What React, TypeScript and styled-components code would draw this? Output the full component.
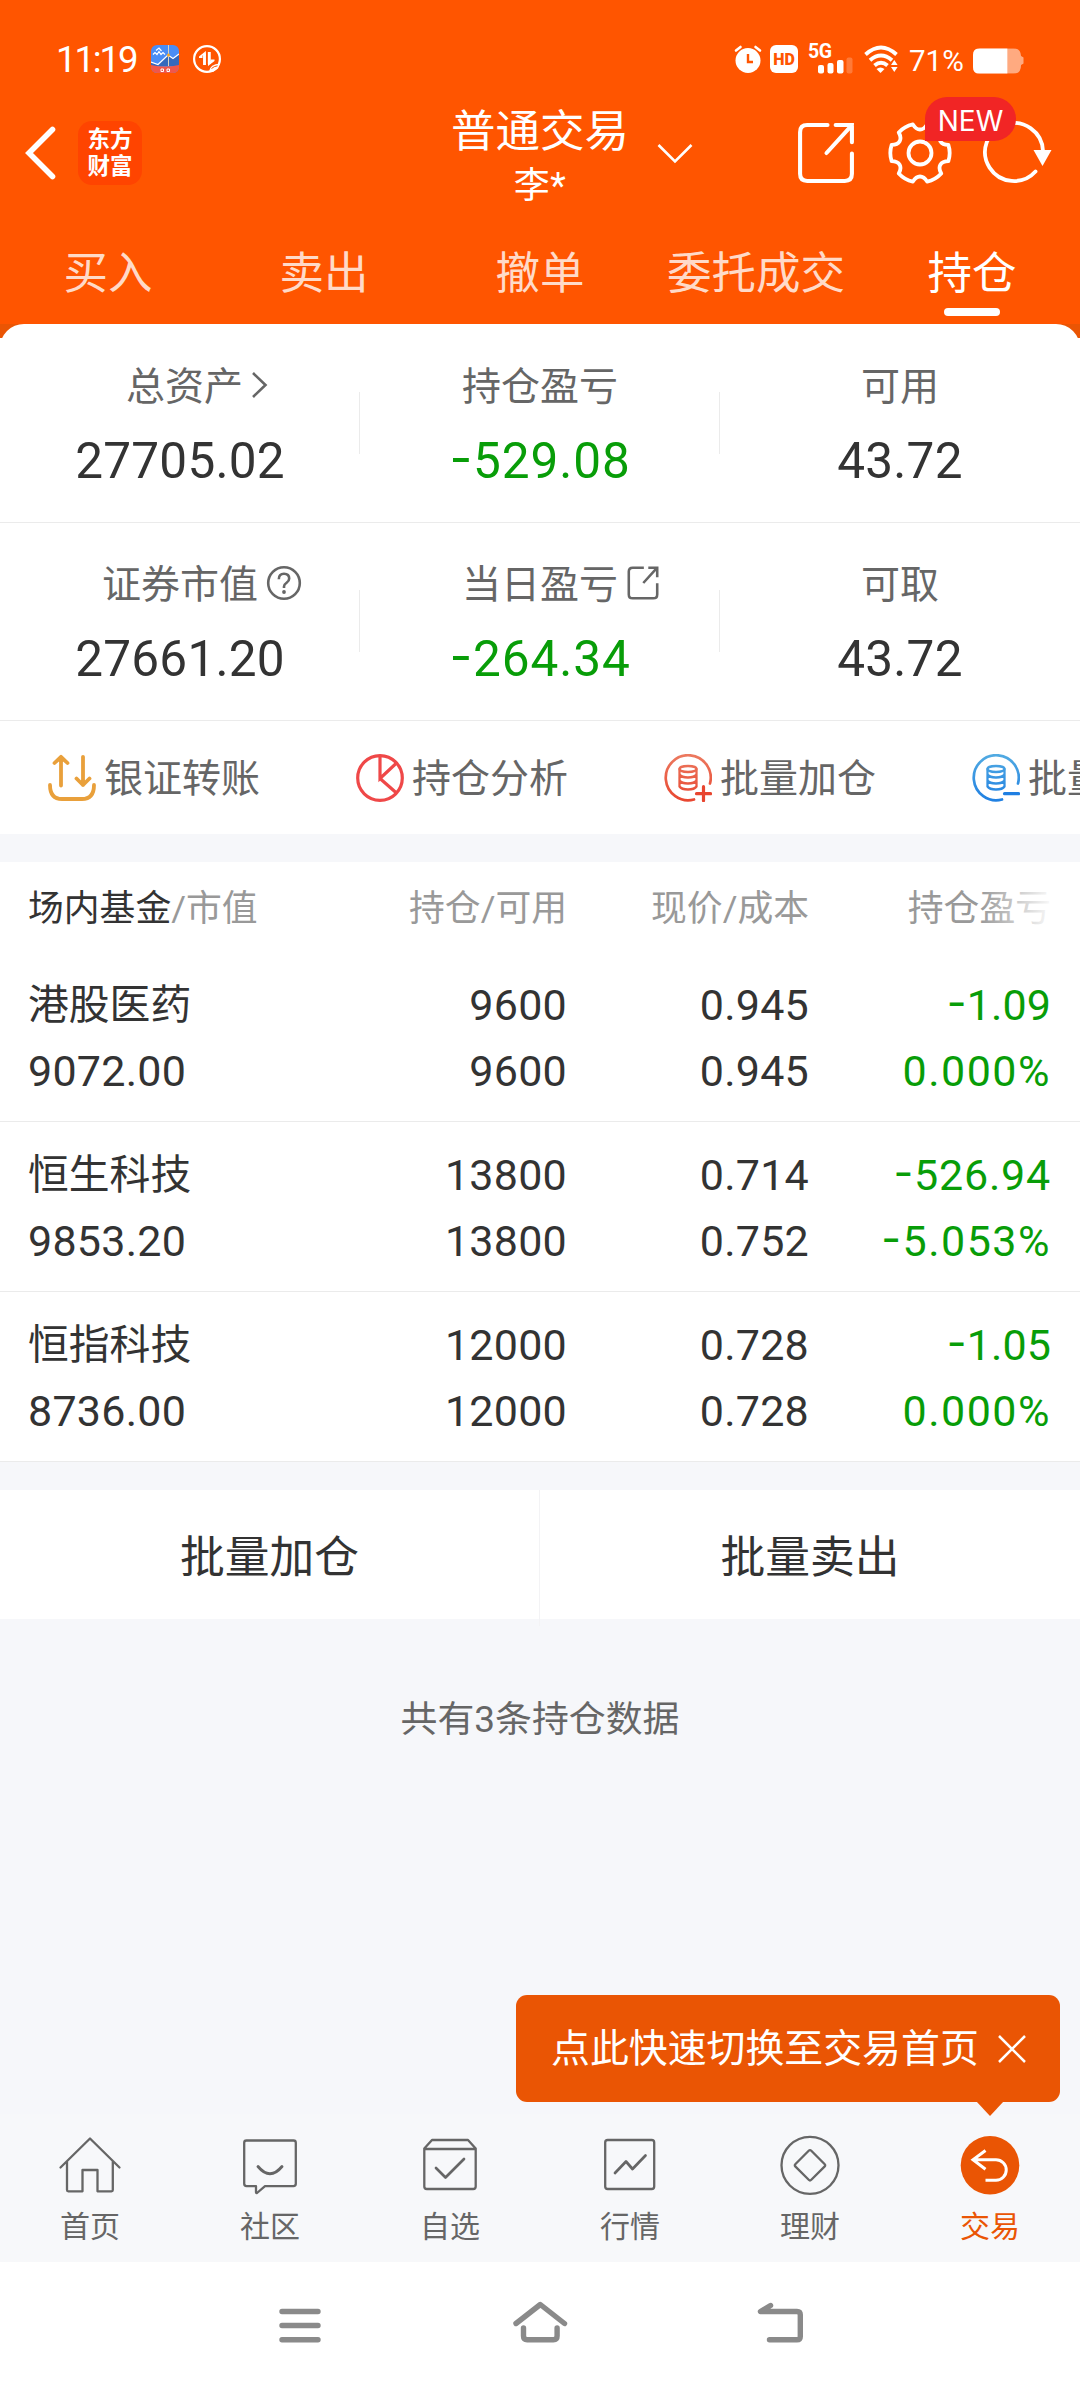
import React from 'react';
import styled, { createGlobalStyle } from 'styled-components';

const GlobalStyle = createGlobalStyle`
  *, *::before, *::after { box-sizing: border-box; }
  body {
    margin: 0;
    background: #f6f7fa;
    font-family: Roboto, "Noto Sans CJK SC", sans-serif;
    color: #333;
  }
  svg { display: block; flex: none; }
`;

const Screen = styled.div`
  width: 1080px;
  height: 2388px;
  display: flex;
  flex-direction: column;
  overflow: hidden;
  background: #f6f7fa;
`;

/* ---------- Header ---------- */

const Header = styled.header`
  height: 324px;
  flex: none;
  display: flex;
  flex-direction: column;
  background: #ff5500;
  color: #fff;
`;

const StatusBar = styled.div`
  height: 90px;
  padding: 28px 56px 0 56px;
  display: flex;
  justify-content: space-between;
`;

const StatusGroup = styled.div`
  height: 62px;
  display: flex;
  align-items: center;
`;

const Clock = styled.span`
  width: 95px;
  font-size: 36.5px;
  line-height: 62px;
  letter-spacing: -2.1px;
  padding-top: 1px;
`;

const HdBadge = styled.span`
  width: 28px;
  height: 28px;
  margin-left: 8px;
  border-radius: 6px;
  background: #fff;
  color: #ff5500;
  font: 900 16px/29px Roboto, sans-serif;
  text-align: center;
`;

const Signal = styled.svg`
  margin-left: 10px;
  overflow: visible;
`;

const Battery = styled.span`
  font-size: 29.5px;
  line-height: 62px;
  margin: 3px 8px 0 10px;
  width: 56px;
`;

const TitleBar = styled.div`
  height: 131px;
  display: grid;
  grid-template-columns: 360px 360px 360px;
`;

const BrandSide = styled.div`
  display: flex;
  align-items: center;
  padding: 0 0 5px 24px;
  gap: 20px;
`;

const BrandMark = styled.div`
  width: 64px;
  height: 64px;
  border-radius: 14px;
  background: #ff4400;
  display: flex;
  flex-direction: column;
  align-items: center;
  justify-content: center;
  font-size: 22.5px;
  font-weight: 700;
  line-height: 27px;
`;

const TitleSide = styled.div`
  display: flex;
  flex-direction: column;
  align-items: center;
  padding-top: 12px;
`;

const TitleLine = styled.div`
  font-size: 44.5px;
  line-height: 60px;
  white-space: nowrap;
`;

const AccountLine = styled.div`
  font-size: 36px;
  line-height: 48px;
  letter-spacing: 0.5px;
`;

const TitleWrap = styled.div`
  position: relative;
  display: flex;
  flex-direction: column;
  align-items: center;
`;

const Dropdown = styled.svg`
  position: absolute;
  left: 204px;
  top: 40px;
`;

const ActionSide = styled.div`
  position: relative;
  display: flex;
  align-items: center;
  padding: 0 0 5px 76px;
`;

const ActionIcon = styled.svg<{ $gap?: number }>`
  margin-left: ${(p) => p.$gap ?? 0}px;
`;

const NewBadge = styled.span`
  position: absolute;
  left: 205px;
  top: 7px;
  width: 91px;
  height: 44px;
  border-radius: 22px 22px 22px 0;
  background: #f12525;
  font: 400 28px/48px Inter, sans-serif;
  text-align: center;
`;

const Tabs = styled.nav`
  flex: 1;
  display: grid;
  grid-template-columns: repeat(5, 1fr);
`;

const Tab = styled.div<{ $active?: boolean }>`
  display: flex;
  flex-direction: column;
  align-items: center;
  padding-top: 23px;
  font-size: 44.5px;
  line-height: 60px;
  color: ${(p) => (p.$active ? '#fff' : '#ffdac8')};
  &::after {
    content: '';
    width: 56px;
    height: 8px;
    margin-top: 4px;
    border-radius: 4px;
    background: ${(p) => (p.$active ? '#fff' : 'transparent')};
  }
`;

/* ---------- Summary ---------- */

const SummaryBackdrop = styled.section`
  flex: none;
  background: linear-gradient(#ea5504 0 14px, #fff 14px);
`;

const SummaryCard = styled.div`
  border-radius: 24px 24px 0 0;
  background: #fff;
`;

const SummaryRow = styled.div<{ $height: number }>`
  height: ${(p) => p.$height}px;
  display: grid;
  grid-template-columns: repeat(3, 1fr);
  align-items: end;
  border-bottom: 1px solid #ebebeb;
`;

const SummaryCell = styled.div`
  height: 197px;
  padding-top: 36px;
  display: flex;
  flex-direction: column;
  align-items: center;
  background: linear-gradient(#ebebeb, #ebebeb) right 67px / 1px 62px no-repeat;
  &:last-child { background: none; }
`;

const SummaryLabel = styled.div`
  height: 52px;
  display: flex;
  align-items: center;
  font-size: 39px;
  line-height: 52px;
  color: #666;
`;

const LabelIcon = styled.svg<{ $pull: number }>`
  margin: 0 -${(p) => p.$pull}px 5px 8px;
`;

const SummaryValue = styled.div<{ $down?: boolean }>`
  margin-top: 18px;
  font-size: 49.5px;
  line-height: 60px;
  letter-spacing: ${(p) => (p.$down ? 0.9 : 0.2)}px;
  color: ${(p) => (p.$down ? '#089d08' : '#333')};
`;

const Sign = styled.span`
  font-family: Inter, sans-serif;
  font-feature-settings: 'case';
  line-height: 0;
`;

const Toolbar = styled.div`
  height: 113px;
  padding-left: 48px;
  display: flex;
  align-items: center;
  overflow: hidden;
  background: #fff;
`;

const Tool = styled.div`
  flex: none;
  width: 308px;
  display: flex;
  align-items: center;
  gap: 8px;
  font-size: 39px;
  line-height: 54px;
  color: #666;
`;

const ToolText = styled.span`
  padding-top: 2px;
`;

const Band = styled.div`
  flex: none;
  height: 28px;
`;

/* ---------- Holdings ---------- */

const Table = styled.section`
  flex: none;
  background: #fff;
`;

const TableHead = styled.div`
  position: relative;
  height: 90px;
  padding: 0 28px;
  display: grid;
  grid-template-columns: 539px 242px 242px;
  font-size: 35.8px;
  line-height: 94px;
  color: #999;
`;

const HeadFirst = styled.div`
  display: flex;
  justify-content: space-between;
`;

const HeadCell = styled.div`
  text-align: right;
  white-space: nowrap;
`;

const Strong = styled.span`
  color: #333;
`;

const HeadFade = styled.div`
  position: absolute;
  top: 0;
  right: 0;
  width: 100px;
  height: 90px;
  background: linear-gradient(90deg, rgba(255, 255, 255, 0), #fff 75%);
`;

const Row = styled.div`
  height: 170px;
  padding: 20px 28px 0;
  border-bottom: 1px solid #ebebeb;
`;

const RowLine = styled.div`
  display: grid;
  grid-template-columns: 296px 243px 242px 242px;
  font-size: 43px;
  line-height: 66px;
`;

const Name = styled.div`
  font-size: 40.8px;
`;

const Cell = styled.div<{ $left?: boolean; $down?: boolean; $tracking?: number }>`
  text-align: ${(p) => (p.$left ? 'left' : 'right')};
  letter-spacing: ${(p) => p.$tracking ?? 0.25}px;
  color: ${(p) => (p.$down ? '#089d08' : '#333')};
`;

const BatchBar = styled.div`
  flex: none;
  height: 129px;
  display: grid;
  grid-template-columns: 540px 540px;
  background: #fff;
`;

const BatchButton = styled.div`
  text-align: center;
  font-size: 44.8px;
  line-height: 136px;
  &:first-child { border-right: 1px solid #f3f3f5; }
`;

const Footnote = styled.div`
  flex: 1;
  padding-top: 75px;
  text-align: center;
  font-size: 36.9px;
  line-height: 52px;
  color: #666;
`;

/* ---------- Bottom ---------- */

const BottomTabs = styled.nav`
  position: relative;
  flex: none;
  height: 148px;
  display: grid;
  grid-template-columns: repeat(6, 1fr);
  background: #f7f8fa;
`;

const BottomTab = styled.div<{ $active?: boolean }>`
  display: flex;
  flex-direction: column;
  align-items: center;
  padding-top: 19px;
  font-size: 30px;
  line-height: 40px;
  color: ${(p) => (p.$active ? '#ea5504' : '#666')};
  & > svg { margin-bottom: 10px; }
`;

const Tip = styled.div`
  position: absolute;
  right: 20px;
  bottom: 160px;
  width: 544px;
  height: 107px;
  padding: 0 33px 0 35px;
  border-radius: 11px;
  background: #ea5504;
  color: #fff;
  display: flex;
  align-items: center;
  justify-content: space-between;
  font-size: 38.9px;
  line-height: 107px;
  white-space: nowrap;
  &::after {
    content: '';
    position: absolute;
    right: 56px;
    top: 106px;
    border: 14px solid transparent;
    border-top: 15px solid #ea5504;
    border-bottom: 0;
  }
`;

const SystemNav = styled.div`
  flex: none;
  height: 126px;
  padding: 0 270px;
  display: flex;
  justify-content: space-between;
  align-items: center;
  background: #fff;
`;

/* ---------- Icons ---------- */

const gearPath = (() => {
  const pt = (deg: number, r: number) => {
    const a = (deg * Math.PI) / 180;
    return `${(32 + r * Math.cos(a)).toFixed(2)} ${(32 + r * Math.sin(a)).toFixed(2)}`;
  };
  let d = '';
  for (let i = 0; i < 6; i++) {
    const t = i * 60;
    d += `${i === 0 ? 'M' : 'L'}${pt(t - 16, 29.5)}Q${pt(t, 31)} ${pt(t + 16, 29.5)}`;
    d += `C${pt(t + 22, 22)} ${pt(t + 38, 22)} ${pt(t + 44, 29.5)}`;
  }
  return d + 'Z';
})();

const BackIcon = () => (
  <svg width="34" height="60" viewBox="0 0 34 60" fill="none" stroke="#fff" strokeWidth="5.6" strokeLinecap="round">
    <path d="M28.500 6.500L5 30l23.500 23.500" />
  </svg>
);

const AppIcon = () => (
  <svg width="28" height="28" viewBox="0 0 28 28">
    <clipPath id="app"><rect width="28" height="28" rx="6" /></clipPath>
    <g clipPath="url(#app)">
      <rect width="28" height="28" fill="#4a8df5" />
      <path d="M0 17l7 2.500L17 10l5 3.500 6-4.500v12H0z" fill="#3569bd" />
      <path d="M0 20q14 3 28 0v8H0z" fill="#f0574a" />
      <path d="M0 17l7 2.500L17 10l5 3.500L28 9" fill="none" stroke="#fff" strokeWidth="1.200" />
      <path d="M17.500 0v21" stroke="#d9d3c0" strokeWidth="1" />
      <path d="M2 9.500l2-2 2 2 2-3 2 3 2-2 2 2M5 5.500L8 3l2.500 3" fill="none" stroke="#fff" strokeWidth="1.200" />
      <circle cx="17.500" cy="10" r="1.500" fill="#f5a623" />
      <path d="M10 24h2.500v2.500H10zM16 24h2.500v2.500H16z" fill="none" stroke="#fff" />
    </g>
  </svg>
);

const SyncIcon = styled.svg`
  margin-left: 14px;
`;

const SyncBadgeIcon = () => (
  <SyncIcon width="28" height="28" viewBox="0 0 28 28" fill="none" stroke="#fff">
    <circle cx="14" cy="14" r="12.900" strokeWidth="2.200" />
    <path d="M11.500 20V8.500M16.300 7v12" strokeWidth="2.900" />
    <path d="M12.900 6v4.500H9.500V13H6v-1.500zM15 21v-5h2.500v-1.500H21.500V16z" fill="#fff" stroke="none" />
    <path d="M16 26.500q1-7.500 11-8l-2 5-5 3.500z" fill="#fff" stroke="none" />
    <path d="M18.500 23.500q2.500-2.300 6-2.700" stroke="#ff5500" strokeWidth="1" />
  </SyncIcon>
);

const AlarmIcon = () => (
  <svg width="28" height="28" viewBox="0 0 28 28" fill="none">
    <circle cx="14" cy="15.500" r="12.500" fill="#fff" />
    <path d="M2 5.500L6.500 2M26 5.500L21.500 2" stroke="#fff" strokeWidth="2.600" strokeLinecap="round" />
    <path d="M14 9v8h5" stroke="#ff5500" strokeWidth="2.400" />
  </svg>
);

const SignalIcon = () => (
  <Signal width="46" height="32" viewBox="0 0 46 32" fill="#fff">
    <text x="0" y="15" fontFamily="Roboto, sans-serif" fontWeight="700" fontSize="19.500" textLength="24">5G</text>
    <rect x="10" y="22" width="6" height="8.500" rx="2" />
    <rect x="19.500" y="20" width="6" height="10.500" rx="2" />
    <rect x="29" y="17" width="6.500" height="13.500" rx="2" />
    <rect x="38.500" y="14.500" width="6" height="16" rx="2" opacity="0.220" />
  </Signal>
);

const Wifi = styled.svg`
  margin-left: 10px;
`;

const WifiIcon = () => (
  <Wifi width="35" height="28" viewBox="0 0 35 28" fill="none" stroke="#fff" strokeWidth="3.900">
    <path d="M1.500 9.500q15.500-14 31 0" />
    <path d="M6 15.200q11-9.500 22 0" />
    <path d="M10.500 20.500q6.500-5.500 13 0" />
    <path d="M12.500 24q4-3 8 0l-4 4z" fill="#fff" stroke="none" />
    <path d="M27 20l3.300-5 3.300 5zM27 22l3.300 5 3.300-5z" fill="#fff" stroke="none" />
  </Wifi>
);

const BatterySvg = styled.svg`
  margin-top: 3px;
`;

const BatteryIcon = () => (
  <BatterySvg width="51" height="26" viewBox="0 0 52 26">
    <clipPath id="bat"><path d="M7 0h34q7.500 0 8 8l2.500 1.500v6L49 17q0 9-8 9H7q-7 0-7-7V7q0-7 7-7z" /></clipPath>
    <g clipPath="url(#bat)">
      <rect width="52" height="26" fill="#ffaa80" />
      <rect width="35" height="26" fill="#fff" />
    </g>
  </BatterySvg>
);

const ShareStrokes = () => (
  <>
    <path d="M30 3H10Q3 3 3 10v41q0 7 7 7h37q7 0 7-7V31" />
    <path d="M38 3h16v17M54 3L29 30.500" />
  </>
);

const QuestionIcon = () => (
  <LabelIcon $pull={44} width="36" height="36" viewBox="0 0 36 36" fill="none" stroke="#666" strokeWidth="2.600">
    <circle cx="18" cy="18" r="15.800" />
    <path d="M12.800 14.200q0-5.400 5.200-5.400t5.200 4.800q0 2.400-2.600 4.200T18 21.500V23" />
    <circle cx="18" cy="27" r="1.900" fill="#666" stroke="none" />
  </LabelIcon>
);

const TransferIcon = () => (
  <svg width="48" height="48" viewBox="0 0 48 48" fill="none" stroke="#e9a03b" strokeWidth="3.800" strokeLinecap="round" strokeLinejoin="round">
    <path d="M13 31.500V2.800M6.500 9L13 2.800 19.500 9M35 2.800V31M28.500 24.500L35 31l6.500-6.500" />
    <path d="M2 31q0 14 12 14h20q12 0 12-14" />
  </svg>
);

const PieIcon = () => (
  <svg width="48" height="48" viewBox="0 0 48 48" fill="none" stroke="#ef4848" strokeWidth="3.200">
    <circle cx="24" cy="24" r="22.300" />
    <path d="M24 2v22.500L40.500 9M24 24.500L40.500 39" />
  </svg>
);

const StackIcon = ({ id, from, to, minus }: { id: string; from: string; to: string; minus?: boolean }) => (
  <svg width="48" height="48" viewBox="0 0 48 48" fill="none" stroke={`url(#${id})`} strokeWidth="2.700" strokeLinecap="round">
    <linearGradient id={id} gradientUnits="userSpaceOnUse" x1="0" y1="0" x2="0" y2="48">
      <stop stopColor={from} />
      <stop offset="1" stopColor={to} />
    </linearGradient>
    <path d="M30 45.500A22.500 22.500 0 1 1 46 29.500" />
    <ellipse cx="24" cy="15" rx="8.500" ry="3" strokeWidth="2.300" />
    <path d="M15.500 15v17.500q2 3 8.500 3t8.500-3V15M15.500 20.500q2 3 8.500 3t8.500-3M15.500 26.500q2 3 8.500 3t8.500-3" strokeWidth="2.300" />
    <path d={minus ? 'M32.500 39.700h14' : 'M32.500 39.700h14M39.500 32.700v14'} stroke={to} strokeWidth="3.200" />
  </svg>
);

const tabIconProps = {
  width: 64, height: 64, viewBox: '0 0 64 64', fill: 'none', stroke: '#666', strokeWidth: 2.3,
  strokeLinecap: 'round', strokeLinejoin: 'round',
} as const;

const bottomTabs: { label: string; icon: React.ReactNode; active?: boolean }[] = [
  {
    label: '首页',
    icon: (
      <svg {...tabIconProps}>
        <path d="M2.500 34.500L32 5.500l29.500 29M9 28.500V57q0 1.300 1.300 1.300h14.200V37h15v21.300h14q1.300 0 1.300-1.300V28.500" />
      </svg>
    ),
  },
  {
    label: '社区',
    icon: (
      <svg {...tabIconProps}>
        <path d="M8.500 7.500h47q2.300 0 2.300 2.300v41q0 2.300-2.300 2.300H27L19 60q-1 .5-1-1v-5.900H8.500q-2.300 0-2.300-2.300v-41q0-2.300 2.300-2.300z" />
        <path d="M20 33.500q12 14.500 24 0" strokeWidth="2.900" />
      </svg>
    ),
  },
  {
    label: '自选',
    icon: (
      <svg {...tabIconProps}>
        <path d="M6.300 15.500L14 7h36l7.700 8.500V53.500q0 2.500-2.500 2.500H8.800q-2.500 0-2.500-2.500zM6.300 16h51.400" />
        <path d="M18 35l9.500 9.500L46 26" strokeWidth="2.700" />
      </svg>
    ),
  },
  {
    label: '行情',
    icon: (
      <svg {...tabIconProps}>
        <rect x="7.200" y="7" width="49" height="49" rx="2.500" />
        <path d="M17 40l11-11.500 6.500 7.500L47.500 22.500" strokeWidth="2.700" />
      </svg>
    ),
  },
  {
    label: '理财',
    icon: (
      <svg {...tabIconProps}>
        <circle cx="32" cy="32.300" r="28.500" />
        <path d="M30.700 17.800q1.300-1.300 2.600 0L46.500 31q1.300 1.300 0 2.600L33.300 46.800q-1.300 1.300-2.600 0L17.500 33.600q-1.300-1.300 0-2.600z" />
      </svg>
    ),
  },
  {
    label: '交易',
    active: true,
    icon: (
      <svg {...tabIconProps} stroke="#fff" strokeWidth={3} strokeLinecap="butt">
        <circle cx="32" cy="32.300" r="29.300" fill="#ea5504" stroke="none" />
        <path d="M27.500 17.500L15 26.800l12.500 9.500M15 26.800h23a10.200 10.200 0 0 1 0 20.500H27.500" strokeLinejoin="miter" />
      </svg>
    ),
  },
];

const holdings = [
  { name: '港股医药', value: '9072.00', held: '9600', free: '9600', price: '0.945', cost: '0.945', pnl: '-1.09', rate: '0.000%' },
  { name: '恒生科技', value: '9853.20', held: '13800', free: '13800', price: '0.714', cost: '0.752', pnl: '-526.94', rate: '-5.053%' },
  { name: '恒指科技', value: '8736.00', held: '12000', free: '12000', price: '0.728', cost: '0.728', pnl: '-1.05', rate: '0.000%' },
];

const Signed = ({ value }: { value: string }) =>
  value.startsWith('-') ? (<><Sign>-</Sign>{value.slice(1)}</>) : (<>{value}</>);

export default function App() {
  return (
    <>
      <GlobalStyle />
      <Screen>
        <Header>
          <StatusBar>
            <StatusGroup>
              <Clock>11:19</Clock>
              <AppIcon />
              <SyncBadgeIcon />
            </StatusGroup>
            <StatusGroup>
              <AlarmIcon />
              <HdBadge>HD</HdBadge>
              <SignalIcon />
              <WifiIcon />
              <Battery>71%</Battery>
              <BatteryIcon />
            </StatusGroup>
          </StatusBar>
          <TitleBar>
            <BrandSide>
              <BackIcon />
              <BrandMark>
                <span>东方</span>
                <span>财富</span>
              </BrandMark>
            </BrandSide>
            <TitleSide>
              <TitleWrap>
                <TitleLine>普通交易</TitleLine>
                <AccountLine>李*</AccountLine>
                <Dropdown width="40" height="24" viewBox="0 0 40 24" fill="none" stroke="#fff" strokeWidth="2.600">
                  <path d="M3.500 3L20 19.500 36.500 3" />
                </Dropdown>
              </TitleWrap>
            </TitleSide>
            <ActionSide>
              <ActionIcon width="60" height="62" viewBox="0 0 57 61" fill="none" stroke="#fff" strokeWidth="4" strokeLinecap="round">
                <ShareStrokes />
              </ActionIcon>
              <ActionIcon $gap={32} width="64" height="64" viewBox="0 0 64 64" fill="none" stroke="#fff" strokeWidth="3.800" strokeLinejoin="round">
                <path d={gearPath} />
                <circle cx="32" cy="32" r="11.500" />
              </ActionIcon>
              <ActionIcon $gap={30} width="70" height="64" viewBox="0 0 70 64" fill="none" stroke="#fff" strokeWidth="3.800" strokeLinecap="round">
                <path d="M53.500 50.500A29 29 0 1 1 61 30" />
                <path d="M51.500 29h18L60.500 45z" fill="#fff" stroke="none" />
              </ActionIcon>
              <NewBadge>NEW</NewBadge>
            </ActionSide>
          </TitleBar>
          <Tabs>
            <Tab>买入</Tab>
            <Tab>卖出</Tab>
            <Tab>撤单</Tab>
            <Tab>委托成交</Tab>
            <Tab $active>持仓</Tab>
          </Tabs>
        </Header>

        <SummaryBackdrop>
          <SummaryCard>
            <SummaryRow $height={199}>
              <SummaryCell>
                <SummaryLabel>
                  总资产
                  <LabelIcon $pull={35} width="18" height="30" viewBox="0 0 18 30" fill="none" stroke="#666" strokeWidth="2.600">
                    <path d="M2 3l12.500 12L2 27" />
                  </LabelIcon>
                </SummaryLabel>
                <SummaryValue>27705.02</SummaryValue>
              </SummaryCell>
              <SummaryCell>
                <SummaryLabel>持仓盈亏</SummaryLabel>
                <SummaryValue $down><Signed value="-529.08" /></SummaryValue>
              </SummaryCell>
              <SummaryCell>
                <SummaryLabel>可用</SummaryLabel>
                <SummaryValue>43.72</SummaryValue>
              </SummaryCell>
            </SummaryRow>
            <SummaryRow $height={198}>
              <SummaryCell>
                <SummaryLabel>证券市值<QuestionIcon /></SummaryLabel>
                <SummaryValue>27661.20</SummaryValue>
              </SummaryCell>
              <SummaryCell>
                <SummaryLabel>
                  当日盈亏
                  <LabelIcon $pull={42} width="34" height="34" viewBox="0 0 57 61" fill="none" stroke="#666" strokeWidth="4.600">
                    <ShareStrokes />
                  </LabelIcon>
                </SummaryLabel>
                <SummaryValue $down><Signed value="-264.34" /></SummaryValue>
              </SummaryCell>
              <SummaryCell>
                <SummaryLabel>可取</SummaryLabel>
                <SummaryValue>43.72</SummaryValue>
              </SummaryCell>
            </SummaryRow>
          </SummaryCard>
          <Toolbar>
            <Tool><TransferIcon /><ToolText>银证转账</ToolText></Tool>
            <Tool><PieIcon /><ToolText>持仓分析</ToolText></Tool>
            <Tool><StackIcon id="add" from="#ec7a60" to="#e8452f" /><ToolText>批量加仓</ToolText></Tool>
            <Tool><StackIcon id="cut" from="#52abe2" to="#1f7fe2" minus /><ToolText>批量卖出</ToolText></Tool>
          </Toolbar>
        </SummaryBackdrop>

        <Band />

        <Table>
          <TableHead>
            <HeadFirst>
              <span><Strong>场内基金</Strong>/市值</span>
              <span>持仓/可用</span>
            </HeadFirst>
            <HeadCell>现价/成本</HeadCell>
            <HeadCell>持仓盈亏</HeadCell>
            <HeadFade />
          </TableHead>
          {holdings.map((h) => (
            <Row key={h.name}>
              <RowLine>
                <Name>{h.name}</Name>
                <Cell>{h.held}</Cell>
                <Cell>{h.price}</Cell>
                <Cell $down $tracking={h.pnl.length > 5 ? 0.8 : 0.1}><Signed value={h.pnl} /></Cell>
              </RowLine>
              <RowLine>
                <Cell $left>{h.value}</Cell>
                <Cell>{h.free}</Cell>
                <Cell>{h.cost}</Cell>
                <Cell $down $tracking={1.5}><Signed value={h.rate} /></Cell>
              </RowLine>
            </Row>
          ))}
        </Table>

        <Band />

        <BatchBar>
          <BatchButton>批量加仓</BatchButton>
          <BatchButton>批量卖出</BatchButton>
        </BatchBar>

        <Footnote>共有3条持仓数据</Footnote>

        <BottomTabs>
          {bottomTabs.map((t) => (
            <BottomTab key={t.label} $active={t.active}>
              {t.icon}
              {t.label}
            </BottomTab>
          ))}
          <Tip>
            点此快速切换至交易首页
            <svg width="30" height="30" viewBox="0 0 30 30" stroke="#fff" strokeWidth="2.500">
              <path d="M2 2l26 26M28 2L2 28" />
            </svg>
          </Tip>
        </BottomTabs>

        <SystemNav>
          <svg width="60" height="60" viewBox="0 0 60 60" stroke="#8a8a8a" strokeWidth="5.400" strokeLinecap="round">
            <path d="M12 16.500h36M12 30.500h36M12 44.700h36" />
          </svg>
          <svg width="60" height="60" viewBox="0 0 60 60" fill="none" stroke="#8a8a8a" strokeWidth="5.400" strokeLinecap="round" strokeLinejoin="round">
            <path d="M6 28.500L30.300 9.500 54.500 28.500M13.500 33v8q0 3.700 3.700 3.700h26.200q3.700 0 3.700-3.700v-8" />
          </svg>
          <svg width="60" height="60" viewBox="0 0 60 60" fill="none" stroke="#8a8a8a" strokeWidth="5.400" strokeLinecap="round" strokeLinejoin="round">
            <path d="M20.500 10.500L10.500 16.500H47q3.300 0 3.300 3.300V41.400q0 3.300-3.300 3.300H19.500" />
          </svg>
        </SystemNav>
      </Screen>
    </>
  );
}
